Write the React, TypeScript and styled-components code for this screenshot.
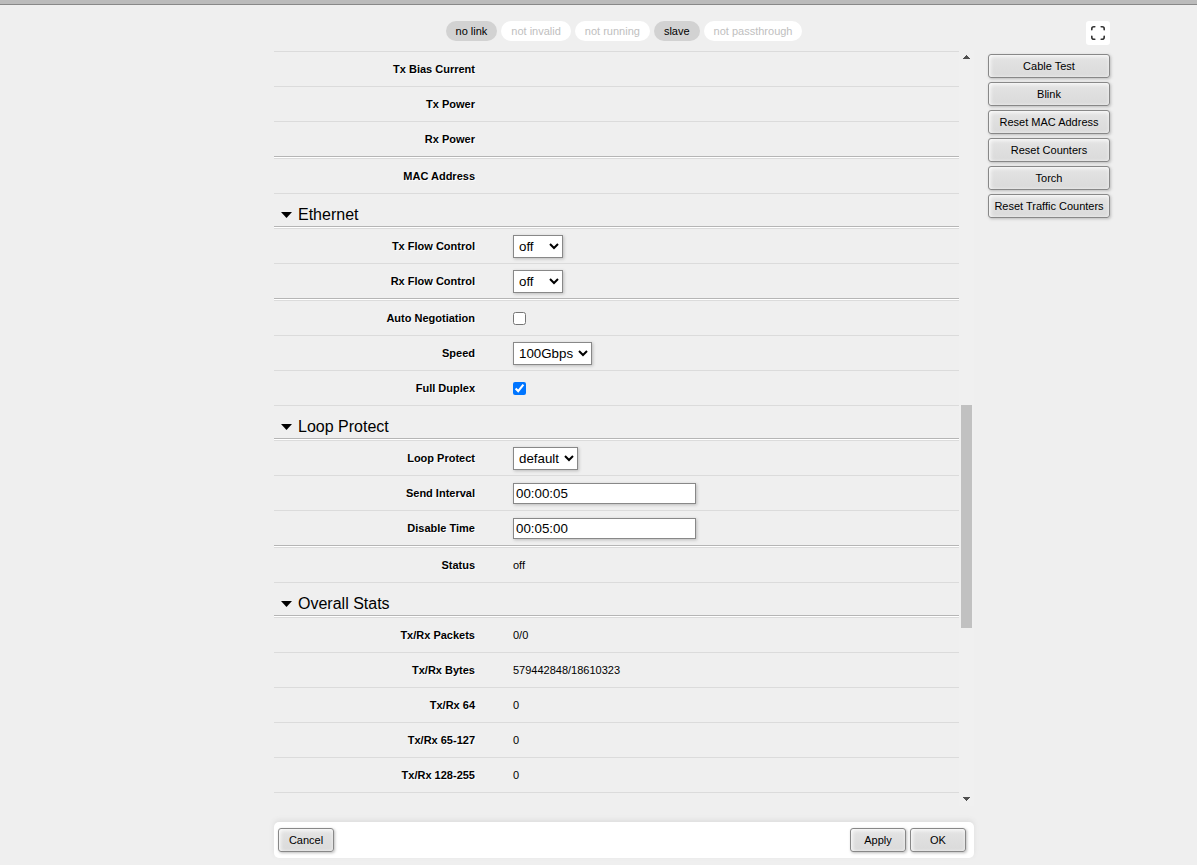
import React from 'react';
import styled, { createGlobalStyle, css } from 'styled-components';

const GlobalStyle = createGlobalStyle`
  * { box-sizing: border-box; }
  body {
    margin: 0;
    background: #efefef;
    color: #000;
    font: 11px/14px "Liberation Sans", Arial, sans-serif;
  }
`;

const Page = styled.div`
  display: flex;
  flex-direction: column;
  min-height: 100vh;
`;

const TopBar = styled.header`
  height: 5px;
  background: #bbb;
  border-bottom: 1px solid #888;
`;

const Content = styled.div`
  flex: 1;
  display: grid;
  grid-template-columns: 1fr minmax(0, 700px) minmax(136px, 1fr);
  padding: 16px 0 7px 51px;
`;

const Panel = styled.main`
  grid-column: 2;
  display: flex;
  flex-direction: column;
`;

const Flags = styled.div`
  display: flex;
  justify-content: center;
  gap: 4px;
  margin-bottom: 9px;
`;

const Flag = styled.span<{ $active?: boolean }>`
  padding: 3px 10px;
  border-radius: 10px;
  white-space: nowrap;
  background: ${p => (p.$active ? '#d2d2d2' : '#fff')};
  color: ${p => (p.$active ? '#000' : '#c0c0c0')};
`;

const ScrollArea = styled.div`
  flex: 1;
  display: flex;
  margin-bottom: 16px;
`;

const Rows = styled.div`
  flex: 1;
  padding-top: 1px;
`;

const Row = styled.div`
  display: flex;
  align-items: center;
  gap: 38px;
  height: 35px;
  border-top: 1px solid #dbdbdb;
`;

const EndLine = styled.div`
  border-top: 1px solid #dbdbdb;
`;

const nameStyle = css`
  width: 201px;
  text-align: right;
  font-weight: bold;
  text-shadow: 1px 1px 1px #fff;
`;

const Label = styled.label`
  ${nameStyle}
`;

const Name = styled.span`
  ${nameStyle}
`;

const Separator = styled.div`
  height: 2px;
  background: #fff;
  border-top: 1px solid #b5b5b5;
`;

const SectionTitle = styled.h2`
  display: flex;
  align-items: center;
  gap: 6px;
  height: 33px;
  margin: 0;
  padding: 9px 7px 0;
  border-top: 1px solid #dbdbdb;
  font-size: 16px;
  line-height: 20px;
  font-weight: normal;
`;

const fieldStyle = css`
  margin: 0;
  border: 1px solid #888;
  border-radius: 0;
  background: #fff;
  color: #000;
  font-family: "Liberation Sans", Arial, sans-serif;
  box-shadow: 1px 1px 3px #bbb;
`;

const Select = styled.select`
  ${fieldStyle}
  height: 23px;
  padding: 1px;
`;

const TextInput = styled.input`
  ${fieldStyle}
  width: 183px;
  height: 21px;
  padding: 1px 2px;
`;

const CheckBox = styled.input`
  width: 13px;
  height: 13px;
  margin: 0;
`;

const ScrollBar = styled.div`
  display: flex;
  flex-direction: column;
  align-items: center;
  width: 15px;
  padding: 5px 2px;
  background: #f0f0f0;
`;

const Track = styled.div`
  flex: 1;
  align-self: stretch;
  display: flex;
  flex-direction: column;
`;

const Space = styled.div<{ $share: number }>`
  flex: ${p => p.$share};
`;

const Thumb = styled.div`
  flex: 223;
  background: #c1c1c1;
`;

const Button = styled.button`
  height: 24px;
  min-width: 56px;
  padding: 0 5px;
  border: 1px solid #888;
  border-radius: 3px;
  background: linear-gradient(#e4e4e4, #dadada);
  box-shadow: inset 1px 1px 4px #fff, 1px 1px 3px #bbb;
  color: #000;
  font: inherit;
  white-space: nowrap;
`;

const Footer = styled.footer`
  display: flex;
  gap: 4px;
  padding: 6px 8px 6px 4px;
  border-radius: 5px;
  background: #fff;
  box-shadow: 0 -2px 5px #ddd;
`;

const Spacer = styled.div`
  flex: 1;
`;

const Side = styled.aside`
  grid-column: 3;
  display: flex;
  flex-direction: column;
  gap: 4px;
  width: 136px;
  padding-left: 14px;
`;

const ExpandButton = styled.button`
  align-self: flex-end;
  display: grid;
  place-items: center;
  width: 24px;
  height: 24px;
  margin-bottom: 5px;
  padding: 0;
  border: 0;
  border-radius: 3px;
  background: #fff;
`;

const flags = [
  { text: 'no link', active: true },
  { text: 'not invalid' },
  { text: 'not running' },
  { text: 'slave', active: true },
  { text: 'not passthrough' },
];

const actions = ['Cable Test', 'Blink', 'Reset MAC Address', 'Reset Counters', 'Torch', 'Reset Traffic Counters'];

function Value({ name, value }: { name: string; value?: string }) {
  return <Row><Name>{name}</Name><span>{value}</span></Row>;
}

function Choice({ id, name, value, options }: { id: string; name: string; value: string; options: string[] }) {
  return (
    <Row>
      <Label htmlFor={id}>{name}</Label>
      <Select id={id} defaultValue={value}>
        {options.map(o => <option key={o}>{o}</option>)}
      </Select>
    </Row>
  );
}

function Check({ id, name, checked }: { id: string; name: string; checked?: boolean }) {
  return (
    <Row>
      <Label htmlFor={id}>{name}</Label>
      <CheckBox id={id} type="checkbox" defaultChecked={checked} />
    </Row>
  );
}

function TextField({ id, name, value }: { id: string; name: string; value: string }) {
  return (
    <Row>
      <Label htmlFor={id}>{name}</Label>
      <TextInput id={id} type="text" defaultValue={value} />
    </Row>
  );
}

function Section({ title }: { title: string }) {
  return (
    <>
      <SectionTitle>
        <svg width="11" height="6" viewBox="0 0 11 6" aria-hidden="true"><path d="M0 0h11L5.5 6z" /></svg>
        {title}
      </SectionTitle>
      <Separator />
    </>
  );
}

export default function App() {
  return (
    <Page>
      <GlobalStyle />
      <TopBar />
      <Content>
        <Panel>
          <Flags>
            {flags.map(f => <Flag key={f.text} $active={f.active}>{f.text}</Flag>)}
          </Flags>
          <ScrollArea>
            <Rows>
              <Value name="Tx Bias Current" />
              <Value name="Tx Power" />
              <Value name="Rx Power" />
              <Separator />
              <Value name="MAC Address" />
              <Section title="Ethernet" />
              <Choice id="tx-flow" name="Tx Flow Control" value="off" options={['auto', 'off', 'on']} />
              <Choice id="rx-flow" name="Rx Flow Control" value="off" options={['auto', 'off', 'on']} />
              <Separator />
              <Check id="auto-negotiation" name="Auto Negotiation" />
              <Choice id="speed" name="Speed" value="100Gbps" options={['10Gbps', '40Gbps', '100Gbps']} />
              <Check id="full-duplex" name="Full Duplex" checked />
              <Section title="Loop Protect" />
              <Choice id="loop-protect" name="Loop Protect" value="default" options={['default', 'off', 'on']} />
              <TextField id="send-interval" name="Send Interval" value="00:00:05" />
              <TextField id="disable-time" name="Disable Time" value="00:05:00" />
              <Separator />
              <Value name="Status" value="off" />
              <Section title="Overall Stats" />
              <Value name="Tx/Rx Packets" value="0/0" />
              <Value name="Tx/Rx Bytes" value="579442848/18610323" />
              <Value name="Tx/Rx 64" value="0" />
              <Value name="Tx/Rx 65-127" value="0" />
              <Value name="Tx/Rx 128-255" value="0" />
              <EndLine />
            </Rows>
            <ScrollBar aria-hidden="true">
              <svg width="7" height="4" viewBox="0 0 7 4" fill="#505050" shapeRendering="crispEdges">
                <path d="M3 0h1v1h1v1h1v1h1v1H0V3h1V2h1V1h1z" />
              </svg>
              <Track>
                <Space $share={346} />
                <Thumb />
                <Space $share={169} />
              </Track>
              <svg width="7" height="4" viewBox="0 0 7 4" fill="#505050" shapeRendering="crispEdges">
                <path d="M0 0h7v1H6v1H5v1H4v1H3V3H2V2H1V1H0z" />
              </svg>
            </ScrollBar>
          </ScrollArea>
          <Footer>
            <Button type="button">Cancel</Button>
            <Spacer />
            <Button type="button">Apply</Button>
            <Button type="button">OK</Button>
          </Footer>
        </Panel>
        <Side>
          <ExpandButton type="button" aria-label="Full screen">
            <svg width="14" height="14" viewBox="0 0 14 14" fill="none" stroke="#333" strokeWidth="1.6" strokeLinecap="round" aria-hidden="true">
              <path d="M.8 3.800V2.800Q.8 .8 2.800 .8H3.800M10.200 .8H11.200Q13.200 .8 13.200 2.800V3.800M13.200 10.200V11.200Q13.200 13.200 11.200 13.200H10.200M3.800 13.200H2.800Q.8 13.200 .8 11.200V10.200" />
            </svg>
          </ExpandButton>
          {actions.map(a => <Button key={a} type="button">{a}</Button>)}
        </Side>
      </Content>
    </Page>
  );
}
